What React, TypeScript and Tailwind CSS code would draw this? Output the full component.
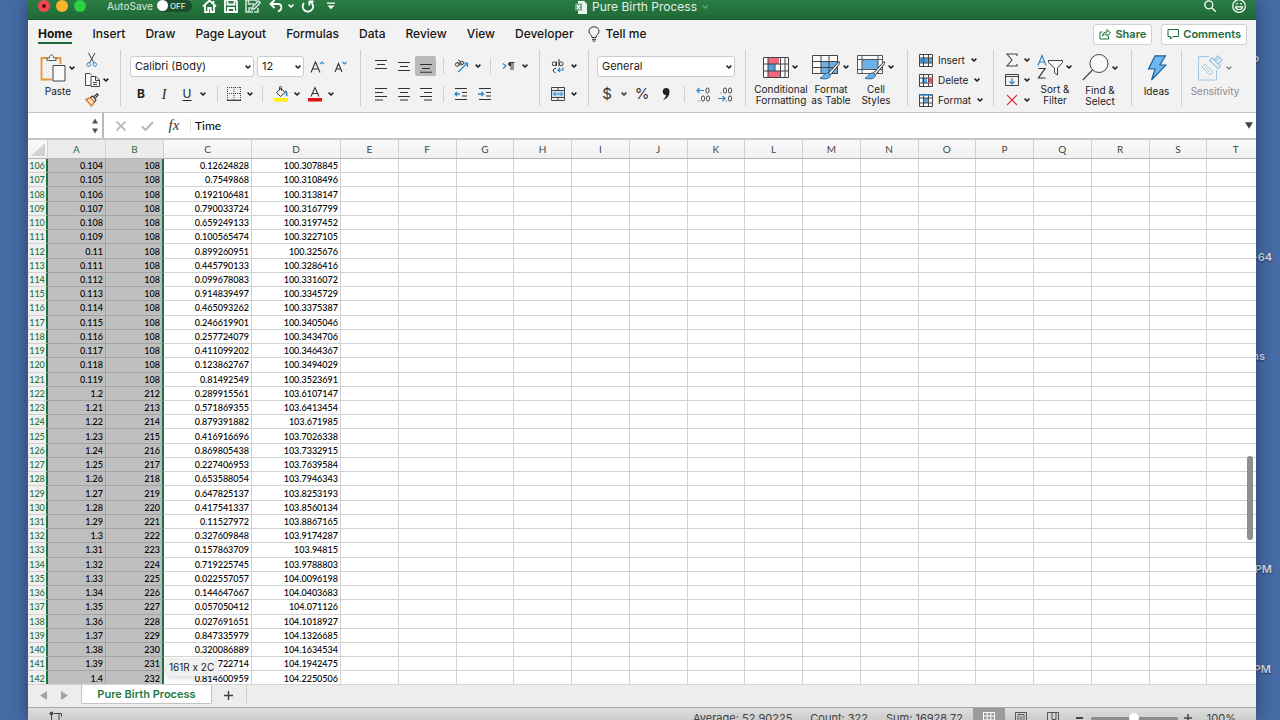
import React from 'react';

interface SheetRow {
  row: number;
  time: string;
  size: string;
  rand: string;
  value: string;
}

const rawRows: [string, string, string, string][] = [
  ['0.104', '108', '0.12624828', '100.3078845'],
  ['0.105', '108', '0.7549868', '100.3108496'],
  ['0.106', '108', '0.192106481', '100.3138147'],
  ['0.107', '108', '0.790033724', '100.3167799'],
  ['0.108', '108', '0.659249133', '100.3197452'],
  ['0.109', '108', '0.100565474', '100.3227105'],
  ['0.11', '108', '0.899260951', '100.325676'],
  ['0.111', '108', '0.445790133', '100.3286416'],
  ['0.112', '108', '0.099678083', '100.3316072'],
  ['0.113', '108', '0.914839497', '100.3345729'],
  ['0.114', '108', '0.465093262', '100.3375387'],
  ['0.115', '108', '0.246619901', '100.3405046'],
  ['0.116', '108', '0.257724079', '100.3434706'],
  ['0.117', '108', '0.411099202', '100.3464367'],
  ['0.118', '108', '0.123862767', '100.3494029'],
  ['0.119', '108', '0.81492549', '100.3523691'],
  ['1.2', '212', '0.289915561', '103.6107147'],
  ['1.21', '213', '0.571869355', '103.6413454'],
  ['1.22', '214', '0.879391882', '103.671985'],
  ['1.23', '215', '0.416916696', '103.7026338'],
  ['1.24', '216', '0.869805438', '103.7332915'],
  ['1.25', '217', '0.227406953', '103.7639584'],
  ['1.26', '218', '0.653588054', '103.7946343'],
  ['1.27', '219', '0.647825137', '103.8253193'],
  ['1.28', '220', '0.417541337', '103.8560134'],
  ['1.29', '221', '0.11527972', '103.8867165'],
  ['1.3', '222', '0.327609848', '103.9174287'],
  ['1.31', '223', '0.157863709', '103.94815'],
  ['1.32', '224', '0.719225745', '103.9788803'],
  ['1.33', '225', '0.022557057', '104.0096198'],
  ['1.34', '226', '0.144647667', '104.0403683'],
  ['1.35', '227', '0.057050412', '104.071126'],
  ['1.36', '228', '0.027691651', '104.1018927'],
  ['1.37', '229', '0.847335979', '104.1326685'],
  ['1.38', '230', '0.320086889', '104.1634534'],
  ['1.39', '231', '0.411722714', '104.1942475'],
  ['1.4', '232', '0.814600959', '104.2250506'],
];

const rows: SheetRow[] = rawRows.map(([time, size, rand, value], i) => ({
  row: 106 + i,
  time,
  size,
  rand,
  value,
}));

const emptyColumns = 'EFGHIJKLMNOPQRST'.split('');
const ribbonTabs = ['Insert', 'Draw', 'Page Layout', 'Formulas', 'Data', 'Review', 'View', 'Developer'];

const Caret: React.FC<{ className?: string }> = ({ className = '' }) => (
  <svg viewBox="0 0 8 6" className={`w-2 h-1.5 shrink-0 ${className}`} fill="none" stroke="currentColor" strokeWidth="1.5">
    <path d="M1.6 1.6 4 4 6.4 1.6" />
  </svg>
);

const Divider: React.FC = () => <div className="w-px shrink-0 self-stretch bg-[#cfcfcf]" />;

const SmallDivider: React.FC<{ className?: string }> = ({ className = '' }) => (
  <div className={`w-px h-4 shrink-0 bg-[#d0d0d0] ${className}`} />
);

interface ToolProps {
  label: string;
  className?: string;
  children: React.ReactNode;
}

const Tool: React.FC<ToolProps> = ({ label, className = '', children }) => (
  <button aria-label={label} className={`flex h-5 shrink-0 items-center justify-center ${className}`}>
    {children}
  </button>
);

interface BigToolProps {
  lines: string[];
  className?: string;
  caret?: boolean;
  children: React.ReactNode;
}

const BigTool: React.FC<BigToolProps> = ({ lines, className = '', caret = true, children }) => (
  <button className={`flex shrink-0 flex-col items-center pt-1 ${className}`}>
    <span className="mb-1 flex h-7 items-center gap-0.5">
      {children}
      {caret && <Caret />}
    </span>
    {lines.map((line) => (
      <span key={line} className="text-[10px] leading-[11px] whitespace-nowrap">{line}</span>
    ))}
  </button>
);

const LinesIcon: React.FC<{ d: string }> = ({ d }) => (
  <svg viewBox="0 0 14 14" className="w-3.5 h-3.5" fill="none" stroke="#333" strokeWidth="1.1">
    <path d={d} />
  </svg>
);

const Brush: React.FC = () => (
  <>
    <path d="M27 7.5 16.5 19l2 1.8L28 9.2Z" fill="#f4f4f4" stroke="#333" />
    <path d="M8 24c3 0 3-5 7.5-5 2 0 3.5 2 2.5 3.6C16.5 25.2 11 25.5 8 24Z" fill="#6cb0e8" stroke="#2a6a9f" />
  </>
);

const TitleBar: React.FC = () => (
  <header className="relative flex h-5 shrink-0 items-center bg-gradient-to-b from-[#2a7c43] to-[#1f6a37] border-b border-[#17572b] pb-2 pl-2.5 pr-2.5 text-white">
    <div className="flex gap-1.5">
      <button aria-label="Close" className="flex h-3 w-3 items-center justify-center rounded-full bg-[#f2494f]">
        <span className="h-1 w-1 rounded-full bg-[#5c0a0d]" />
      </button>
      <button aria-label="Minimize" className="h-3 w-3 rounded-full bg-[#f7b42d]" />
      <button aria-label="Zoom" className="h-3 w-3 rounded-full bg-[#2bd141]" />
    </div>
    <span className="ml-[21px] text-[10px] leading-3 font-medium text-[#c6dccc]">AutoSave</span>
    <button role="switch" aria-checked="false" aria-label="AutoSave" className="ml-1 flex h-3 w-[35px] items-center rounded-full bg-[#1b4f2c] text-[8px] font-medium text-[#e0eae3]">
      <span className="mr-0.5 h-[11px] w-[11px] rounded-full bg-white" />
      OFF
    </button>
    <div className="ml-2.5 flex items-center text-white">
      <Tool label="Home" className="w-[15px]">
        <svg viewBox="0 0 15 14" className="w-[15px] h-3.5" fill="none" stroke="currentColor" strokeWidth="1.8">
          <path d="M1 7.5 7.5 1.5 14 7.5M3 6.5V13h3.200V9h2.600v4H12V6.5M11.5 4.5V2" />
        </svg>
      </Tool>
      <Tool label="Save" className="ml-[7px] w-3.5">
        <svg viewBox="0 0 14 14" className="w-3.5 h-3.5" fill="none" stroke="currentColor" strokeWidth="1.8">
          <path d="M1 1h10.5L13 2.5V13H1ZM3.5 1v4.5h7V1M4 13V9h6v4" />
        </svg>
      </Tool>
      <Tool label="Save a copy" className="ml-[7px] w-4">
        <svg viewBox="0 0 16 14" className="w-4 h-3.5" fill="none" stroke="#cfe3d5" strokeWidth="1.5">
          <path d="M8 13H1V1h9l2 1M3.5 1v4H9M4 13V9h4M7 10.5l1-3L13.5 2 15.2 3.7 9.8 9.5ZM13 9v4H9" />
        </svg>
      </Tool>
      <Tool label="Undo" className="ml-2 w-3.5">
        <svg viewBox="0 0 14 14" className="w-3.5 h-3.5" fill="none" stroke="currentColor" strokeWidth="1.8">
          <path d="M5.5 1 1.5 5l4 4M1.5 5H9c4 0 5 5.5 0 7.5" />
        </svg>
      </Tool>
      <Caret className="ml-1" />
      <Tool label="Redo" className="ml-1.5 w-3.5">
        <svg viewBox="0 0 14 14" className="w-3.5 h-3.5" fill="none" stroke="currentColor" strokeWidth="1.8">
          <path d="M8 2.5h4.5M8.3 2v4.5M8.5 2.5A5.2 5.2 0 1 1 3 4" />
        </svg>
      </Tool>
      <Tool label="Customize toolbar" className="ml-3 w-2">
        <svg viewBox="0 0 8 8" className="w-2 h-2">
          <path d="M0 .5h8v1.3H0ZM.5 3.5h7L4 7.2Z" fill="currentColor" />
        </svg>
      </Tool>
    </div>
    <div className="absolute inset-x-0 top-0 mx-auto flex h-3.5 w-max items-center gap-1 text-[12px] text-[#e3efe6]">
      <svg viewBox="0 0 13 13" className="w-[13px] h-[13px]">
        <path d="M3 0h6l3 3v10H3Z" fill="#e9f3ec" />
        <path d="M0 2.5h7v7H0Z" fill="#6fae84" />
        <path d="m2 4 3 4M5 4 2 8" stroke="#fff" strokeWidth="1.2" />
      </svg>
      Pure Birth Process
      <Caret className="text-[#5fa276]" />
    </div>
    <div className="ml-auto flex items-center gap-4">
      <Tool label="Search" className="w-3">
        <svg viewBox="0 0 12 12" className="w-3 h-3" fill="none" stroke="currentColor" strokeWidth="1.3">
          <circle cx="4.8" cy="4.8" r="4" />
          <path d="m7.8 7.8 4 4" />
        </svg>
      </Tool>
      <Tool label="Feedback" className="w-3.5">
        <svg viewBox="0 0 14 14" className="w-3.5 h-3.5" fill="none" stroke="currentColor" strokeWidth="1.2">
          <circle cx="7" cy="7" r="6.3" />
          <path d="M3.5 7.8c.8 3.6 6.2 3.6 7 0Z" />
          <path d="M5 4v1.500M9 4v1.500" strokeWidth="1.5" />
        </svg>
      </Tool>
    </div>
  </header>
);

const TabStrip: React.FC = () => (
  <nav className="flex h-[30px] shrink-0 items-center pb-0.5 pl-2.5 pr-[9px] text-[12px] font-medium text-[#161616]">
    <div className="flex items-center gap-5">
      <a href="#home" className="relative font-bold leading-5">
        Home
        <span className="absolute inset-x-0 bottom-0 h-0.5 bg-[#1a6b38]" />
      </a>
      {ribbonTabs.map((tab) => (
        <a key={tab} href={`#${tab}`} className="leading-5">{tab}</a>
      ))}
    </div>
    <button className="ml-3.5 flex items-center gap-1.5">
      <svg viewBox="0 0 12 16" className="w-3 h-4" fill="none" stroke="#333" strokeWidth="1">
        <path d="M4 11.5C4 8.5 1 8.5 1 5.3 1 2.5 3.2.8 6 .8s5 1.700 5 4.5c0 3.2-3 3.2-3 6.200ZM4 13.3h4M4.5 15h3" />
      </svg>
      Tell me
    </button>
    <div className="ml-auto flex gap-[9px] text-[11px] font-semibold text-[#1d6b3a]">
      <button className="flex h-[21px] items-center gap-1 rounded-[3px] border border-[#d0d0d0] bg-white px-[5px]">
        <svg viewBox="0 0 12 12" className="w-3 h-3" fill="none" stroke="currentColor" strokeWidth="1">
          <path d="M3.5 4H1v7h8.5V8M3.5 8c.3-3 2-4 4.5-4V1.5L11.5 5 8 8V6C6 6 4.5 6.5 3.5 8Z" />
        </svg>
        Share
      </button>
      <button className="flex h-[21px] items-center gap-1 rounded-[3px] border border-[#d0d0d0] bg-white px-[5px]">
        <svg viewBox="0 0 12 12" className="w-3 h-3" fill="none" stroke="currentColor" strokeWidth="1">
          <path d="M1 1.5h10.5v7H6L3.5 11V8.5H1Z" />
        </svg>
        Comments
      </button>
    </div>
  </nav>
);

const ClipboardGroup: React.FC = () => (
  <div className="flex w-[92px] shrink-0 gap-0.5 pl-3">
    <BigTool lines={['Paste']} className="w-9">
      <svg viewBox="0 0 26 28" className="w-[26px] h-7 shrink-0" fill="none">
        <path d="M7 4H1.5v21.5H12M16 4h4.5v6" stroke="#e8963c" strokeWidth="1.8" />
        <path d="M7 6.5V4h2.5C9.5 0 13.5 0 13.5 4H16v2.5Z" fill="#fff" stroke="#555" />
        <path d="M13 11.5h12V27H13Z" fill="#fafafa" stroke="#444" />
      </svg>
    </BigTool>
    <div className="flex flex-col pl-1.5">
      <Tool label="Cut" className="w-4">
        <svg viewBox="0 0 12 14" className="w-3 h-3.5" fill="none">
          <path d="M2.5 0 8 10M9 0 3.5 10" stroke="#444" />
          <circle cx="2.7" cy="11.5" r="1.8" stroke="#2f86c9" />
          <circle cx="8.8" cy="11.5" r="1.8" stroke="#2f86c9" />
        </svg>
      </Tool>
      <div className="flex items-center gap-0.5">
        <Tool label="Copy" className="w-4">
          <svg viewBox="0 0 15 14" className="w-[15px] h-3.5" fill="#fafafa" stroke="#444">
            <path d="M5.5 12.5h-5V.5H5l2 2M6 3.5h5L14.5 7v6.5H6ZM10.5 3.5V7.5h4M8 9.5h4M8 11.5h4" />
          </svg>
        </Tool>
        <Caret />
      </div>
      <Tool label="Format painter" className="w-4">
        <svg viewBox="0 0 14 14" className="w-3.5 h-3.5" fill="none">
          <path d="M1 6.5 5.5 4.5 9.500 9 6.5 13Z" fill="#fbe3cc" stroke="#e07b28" strokeWidth="1.4" />
          <path d="M5.5 4.5 7.5 3l3.500 4-1.500 2M8.500 4.200 12 .8 13.300 2 9.800 5.600" stroke="#333" strokeWidth="1.1" />
        </svg>
      </Tool>
    </div>
  </div>
);

const FontGroup: React.FC = () => (
  <div className="flex w-[239px] shrink-0 flex-col justify-between pt-1.5 pb-0.5">
    <div className="flex items-center gap-[3px] pl-[9px]">
      <label className="relative flex items-center">
        <select aria-label="Font" className="h-[21px] w-[124px] appearance-none rounded-[3px] border border-[#cbcbcb] bg-white pl-1 text-[11px]">
          <option>Calibri (Body)</option>
        </select>
        <Caret className="absolute right-0.5" />
      </label>
      <label className="relative flex items-center">
        <select aria-label="Font size" className="h-[21px] w-[47px] appearance-none rounded-[3px] border border-[#cbcbcb] bg-white pl-1 text-[11px]">
          <option>12</option>
        </select>
        <Caret className="absolute right-0.5" />
      </label>
      <Tool label="Increase font size" className="w-5">
        <svg viewBox="0 0 14 14" className="w-3.5 h-3.5" fill="none">
          <path d="M1 12.5 5.5 2l4.5 10.5M2.7 9h5.6" stroke="#333" strokeWidth="1.1" />
          <path d="m10 4 2-2 2 2" stroke="#2f86c9" strokeWidth="1.2" />
        </svg>
      </Tool>
      <Tool label="Decrease font size" className="w-5">
        <svg viewBox="0 0 14 14" className="w-3.5 h-3.5" fill="none">
          <path d="M2 12 5.5 3.5 9 12M3.3 9h4.4" stroke="#333" strokeWidth="1.1" />
          <path d="m9.5 2 2 2 2-2" stroke="#2f86c9" strokeWidth="1.2" />
        </svg>
      </Tool>
    </div>
    <div className="flex items-center pl-2 text-[12px] text-[#222]">
      <Tool label="Bold" className="w-6 font-bold">B</Tool>
      <Tool label="Italic" className="w-[22px] font-['Liberation_Serif'] text-[14px] italic">I</Tool>
      <Tool label="Underline" className="w-6 underline underline-offset-2">U</Tool>
      <Caret />
      <SmallDivider className="ml-2.5 mr-1.5" />
      <Tool label="Borders" className="w-5">
        <svg viewBox="0 0 14 14" className="w-3.5 h-3.5" fill="none" stroke="#444">
          <path d="M.5 0v13M13.5 0v13M7 0v13M0 .5h14M0 6.5h14" strokeDasharray="1 1" />
          <path d="M0 13.3h14" strokeWidth="1.3" />
        </svg>
      </Tool>
      <Caret className="ml-0.5" />
      <SmallDivider className="mx-2" />
      <Tool label="Fill color" className="w-5">
        <svg viewBox="0 0 14 16" className="w-3.5 h-4" fill="none">
          <path d="M0 12h14v3.5H0Z" fill="#fdf200" />
          <path d="M2.5 6.5 7 2.5l4 4L6.5 10.5ZM5.5 4V1.5c0-1.5 2-1.5 2 0v3" stroke="#333" />
          <path d="M11 5c2 1 2 3 1.5 5" stroke="#2f86c9" strokeWidth="1.6" />
        </svg>
      </Tool>
      <Caret className="ml-0.5" />
      <Tool label="Font color" className="ml-1 w-5">
        <svg viewBox="0 0 14 16" className="w-3.5 h-4" fill="none">
          <path d="M0 12h14v3.5H0Z" fill="#e01010" />
          <path d="M3 10.5 7 1.5l4 9M4.5 7.5h5" stroke="#333" strokeWidth="1.1" />
        </svg>
      </Tool>
      <Caret className="ml-0.5" />
    </div>
  </div>
);

const AlignGroup: React.FC = () => (
  <div className="flex w-[178px] shrink-0 flex-col justify-between pl-2 pt-1.5 pb-0.5">
    <div className="flex items-center">
      <Tool label="Align top" className="w-6"><LinesIcon d="M1 1.5h12M3 5.5h8M1 9.5h12" /></Tool>
      <Tool label="Align middle" className="w-[22px]"><LinesIcon d="M1 3.5h12M3 7.5h8M1 11.5h12" /></Tool>
      <Tool label="Align bottom" className="w-[21px] rounded-[2px] bg-[#b9b9b9]"><LinesIcon d="M1 5.5h12M3 9.5h8M1 13.3h12" /></Tool>
      <SmallDivider className="mx-[7px]" />
      <Tool label="Orientation" className="w-5">
        <svg viewBox="0 0 15 14" className="w-[15px] h-3.5" fill="none">
          <circle cx="3.2" cy="5.5" r="1.8" stroke="#333" />
          <circle cx="7.8" cy="4" r="1.8" stroke="#333" />
          <path d="M3.500 3 6 6.500M4.500 .5l3 4.500" stroke="#333" />
          <path d="M4 13 13.5 4M9.5 4h4v4" stroke="#2f86c9" strokeWidth="1.2" />
        </svg>
      </Tool>
      <Caret className="ml-[3px]" />
      <SmallDivider className="mx-2" />
      <Tool label="Text direction" className="w-5">
        <svg viewBox="0 0 14 12" className="w-3.5 h-3" fill="none">
          <path d="m1 3.500 3 2.500-3 2.500" stroke="#2f86c9" strokeWidth="1.2" />
          <path d="M9 2.500v7.500M11 2.500v7.500M12.500 2.500H8.500" stroke="#333" />
          <path d="M9 2H8C5.500 2 5.500 6 8 6h1Z" fill="#333" />
        </svg>
      </Tool>
      <Caret className="ml-0.5" />
    </div>
    <div className="flex items-center">
      <Tool label="Align left" className="w-6"><LinesIcon d="M1 1.500h12M1 5.500h8M1 9.500h12M1 13h8" /></Tool>
      <Tool label="Center" className="w-[22px]"><LinesIcon d="M1 1.500h12M3 5.500h8M1 9.500h12M3 13h8" /></Tool>
      <Tool label="Align right" className="w-[21px]"><LinesIcon d="M1 1.500h12M5 5.500h8M1 9.500h12M5 13h8" /></Tool>
      <SmallDivider className="mx-[7px]" />
      <Tool label="Decrease indent" className="w-5">
        <svg viewBox="0 0 14 14" className="w-3.5 h-3.5" fill="none" stroke="#333">
          <path d="M1 1.500h12M8 5.500h5M8 9h5M1 12.500h12" />
          <path d="M6 7H1M3 5 1 7l2 2" stroke="#2f86c9" strokeWidth="1.3" />
        </svg>
      </Tool>
      <Tool label="Increase indent" className="ml-1 w-5">
        <svg viewBox="0 0 14 14" className="w-3.5 h-3.5" fill="none" stroke="#333">
          <path d="M1 1.500h12M8 5.500h5M8 9h5M1 12.500h12" />
          <path d="M0 7h5M3.500 5l2 2-2 2" stroke="#2f86c9" strokeWidth="1.3" />
        </svg>
      </Tool>
    </div>
  </div>
);

const WrapGroup: React.FC = () => (
  <div className="flex w-12 shrink-0 flex-col justify-between pl-2 pt-1.5 pb-0.5">
    <div className="flex items-center gap-0.5">
      <Tool label="Wrap text" className="w-5">
        <svg viewBox="0 0 14 15" className="w-3.5 h-[15px]" fill="none" stroke="#333">
          <circle cx="3.2" cy="4.8" r="1.9" />
          <path d="M5.500 2.500v4.500M8 0v7" />
          <circle cx="10.2" cy="4.8" r="1.9" />
          <path d="M5 9.500c-3-1-4 4-.5 4" />
          <path d="M12 8.500v2.500H7.500M9 9l-2 2 2 2" stroke="#2f86c9" strokeWidth="1.2" />
        </svg>
      </Tool>
      <Caret />
    </div>
    <div className="flex items-center gap-0.5">
      <Tool label="Merge cells" className="w-5">
        <svg viewBox="0 0 14 14" className="w-3.5 h-3.5" fill="none">
          <path d="M.5 3.500h13v7H.5Z" fill="#c4e0f5" />
          <path d="M.5.500h13v13H.5ZM.5 3.500h13M.5 10.500h13M7 .5v3M7 10.500v3" stroke="#444" />
          <path d="M2.500 7h9M4.500 5l-2 2 2 2M9.500 5l2 2-2 2" stroke="#2f86c9" />
        </svg>
      </Tool>
      <Caret />
    </div>
  </div>
);

const NumberGroup: React.FC = () => (
  <div className="flex w-[156px] shrink-0 flex-col justify-between pl-2 pt-1.5 pb-0.5">
    <label className="relative flex w-max items-center">
      <select aria-label="Number format" className="h-[21px] w-[138px] appearance-none rounded-[3px] border border-[#cbcbcb] bg-white pl-1 text-[11px]">
        <option>General</option>
      </select>
      <Caret className="absolute right-0.5" />
    </label>
    <div className="flex items-center text-[15px] text-[#333]">
      <Tool label="Currency" className="w-5">$</Tool>
      <Caret className="ml-[3px]" />
      <Tool label="Percent" className="ml-1 w-5">%</Tool>
      <Tool label="Comma style" className="ml-1 w-5">
        <svg viewBox="0 0 8 12" className="w-2 h-3" fill="#222">
          <path d="M4 0c2.500 0 3.500 1.700 3.500 3.700C7.500 7.500 5 11 1 12c2-2 3-3.500 3-5C2 7.200.7 5.500.7 3.600.7 1.600 2 0 4 0Z" />
        </svg>
      </Tool>
      <SmallDivider className="mx-2" />
      <Tool label="Increase decimal" className="w-5">
        <svg viewBox="0 0 14 15" className="w-3.5 h-[15px]" fill="none" stroke="#444">
          <rect x="10" y="1" width="3" height="5" rx="1.5" />
          <rect x="5.5" y="9" width="3" height="5" rx="1.5" />
          <rect x="10.5" y="9" width="3" height="5" rx="1.5" />
          <path d="M3 13.500v1" />
          <path d="M8 3.500H1M3.500 1 1 3.500 3.500 6" stroke="#2f86c9" strokeWidth="1.2" />
        </svg>
      </Tool>
      <Tool label="Decrease decimal" className="ml-0.5 w-5">
        <svg viewBox="0 0 14 15" className="w-3.5 h-[15px]" fill="none" stroke="#444">
          <rect x="5.5" y="1" width="3" height="5" rx="1.5" />
          <rect x="10.5" y="1" width="3" height="5" rx="1.5" />
          <rect x="10.5" y="9" width="3" height="5" rx="1.5" />
          <path d="M3 5.500v1M8.500 13.500v1" />
          <path d="M0 11.500h7M4.500 9 7 11.500 4.500 14" stroke="#2f86c9" strokeWidth="1.2" />
        </svg>
      </Tool>
    </div>
  </div>
);

const StylesGroup: React.FC = () => (
  <div className="flex w-[161px] shrink-0 pl-2">
    <BigTool lines={['Conditional', 'Formatting']} className="w-[54px]">
      <svg viewBox="0 0 26 21" className="w-[26px] h-[21px] shrink-0">
        <path d="M.5.500h25v20H.5Z" fill="#fafafa" />
        <path d="M5 1h11v6H5ZM5 14h13v6H5Z" fill="#f4667c" />
        <path d="M5 7h7v7H5Z" fill="#4f9fe0" />
        <path d="M.5.500h25v20H.5ZM.5 7h25M.5 14h25M5 .5v20M17.500 .5v20M22 .5v20M12 7v7" fill="none" stroke="#444" />
      </svg>
    </BigTool>
    <BigTool lines={['Format', 'as Table']} className="w-[46px]">
      <svg viewBox="0 0 28 26" className="w-7 h-[26px] shrink-0">
        <path d="M.5 1.500h25v18H.5Z" fill="#fafafa" />
        <path d="M9 7.500h16.500v12H9Z" fill="#6cb0e8" />
        <path d="M.5 1.500h25v18H.5ZM.5 7.500h25M.5 13.500h25M9 1.500v18M17 1.500v18" fill="none" stroke="#444" />
        <Brush />
      </svg>
    </BigTool>
    <BigTool lines={['Cell', 'Styles']} className="w-11">
      <svg viewBox="0 0 28 26" className="w-7 h-[26px] shrink-0">
        <path d="M.5 1.500h25v18H.5Z" fill="#fafafa" />
        <path d="M5 5.500h16v10H5Z" fill="#6cb0e8" />
        <path d="M.5 1.500h25v18H.5ZM.5 5.500h25M.5 15.500h25M5 1.500v18M21 1.500v18" fill="none" stroke="#555" />
        <Brush />
      </svg>
    </BigTool>
  </div>
);

const CellsGroup: React.FC = () => {
  const items = [
    { label: 'Insert', accent: 'M3 4h11v5H3Z', mark: 'M7 6.500H1M3.500 4 1 6.500 3.500 9', color: '#2f86c9' },
    { label: 'Delete', accent: 'M3 4h5v5H3Z', mark: 'm9 4 5 5M14 4l-5 5', color: '#d8343f' },
    { label: 'Format', accent: 'M4 4h6v5H4Z', mark: 'M2 0v2M12 0v2M2 1h10', color: '#2f86c9' },
  ];
  return (
    <div className="flex w-[85px] shrink-0 flex-col pl-[11px]">
      {items.map((item) => (
        <button key={item.label} className="flex h-5 shrink-0 items-center gap-[5px] text-[10px]">
          <svg viewBox="0 0 14 13" className="w-3.5 h-[13px]" fill="none">
            <path d="M.5.500h13v12H.5Z" fill="#fafafa" />
            <path d={item.accent} fill="#5aa7e4" />
            <path d="M.5.500h13v12H.5ZM.5 4h13M.5 9h13M4.500 .5v12M9.500 .5v12" stroke="#444" />
            <path d={item.mark} stroke={item.color} strokeWidth="1.4" />
          </svg>
          {item.label}
          <Caret />
        </button>
      ))}
    </div>
  );
};

const EditingGroup: React.FC = () => (
  <div className="flex w-[137px] shrink-0 pl-[11px]">
    <div className="flex w-7 flex-col">
      <button aria-label="AutoSum" className="flex h-5 shrink-0 items-center gap-1">
        <svg viewBox="0 0 14 14" className="w-3.5 h-3.5" fill="none" stroke="#444" strokeWidth="1.1">
          <path d="M12 3V1H2l5 6-5 6h10v-2" />
        </svg>
        <Caret />
      </button>
      <button aria-label="Fill" className="flex h-5 shrink-0 items-center gap-1">
        <svg viewBox="0 0 14 14" className="w-3.5 h-3.5" fill="none" stroke="#444">
          <path d="M.5 1.500h13v11H.5ZM.5 3.500h13" />
          <path d="M7 5v6M4.500 8.500 7 11l2.500-2.500" stroke="#2f86c9" strokeWidth="1.2" />
        </svg>
        <Caret />
      </button>
      <button aria-label="Clear" className="flex h-5 shrink-0 items-center gap-1">
        <svg viewBox="0 0 14 14" className="w-3.5 h-3.5" fill="none" stroke="#d8343f" strokeWidth="1.1">
          <path d="m2 2 10 10M12 2 2 12" />
        </svg>
        <Caret />
      </button>
    </div>
    <BigTool lines={['Sort &', 'Filter']} className="w-11">
      <svg viewBox="0 0 26 26" className="w-[26px] h-[26px] shrink-0" fill="none">
        <path d="M1 11.500 5 1.500l4 10M2.500 8h5" stroke="#2f86c9" strokeWidth="1.2" />
        <path d="M1.500 14.500H8L1.500 24H8.500" stroke="#333" strokeWidth="1.2" />
        <path d="M11.500 6.500h14v2L20.500 14v7l-3-2v-5l-6-5.500Z" fill="#fafafa" stroke="#444" />
      </svg>
    </BigTool>
    <BigTool lines={['Find &', 'Select']} className="w-[46px]">
      <svg viewBox="0 0 27 27" className="w-[27px] h-[27px] shrink-0">
        <circle cx="17" cy="9.5" r="9" fill="#fafafa" stroke="#444" />
        <path d="M10.500 16 .8 26" stroke="#444" strokeWidth="1.2" />
      </svg>
    </BigTool>
  </div>
);

const Ribbon: React.FC = () => (
  <div className="flex h-[63px] shrink-0 border-b border-[#c4c4c4] pb-1.5 text-[#1c1c1c]">
    <ClipboardGroup />
    <Divider />
    <FontGroup />
    <Divider />
    <AlignGroup />
    <Divider />
    <WrapGroup />
    <Divider />
    <NumberGroup />
    <Divider />
    <StylesGroup />
    <Divider />
    <CellsGroup />
    <Divider />
    <EditingGroup />
    <Divider />
    <BigTool lines={['Ideas']} className="w-[49px]" caret={false}>
      <svg viewBox="0 0 20 26" className="w-5 h-[26px]">
        <path d="M8 .8h10.500L13 10h6L4.500 25 8 14H1.500Z" fill="#6db6ee" stroke="#1f6196" strokeWidth="1.2" />
      </svg>
    </BigTool>
    <Divider />
    <BigTool lines={['Sensitivity']} className="w-[66px] text-[#8b8b8b]">
      <svg viewBox="0 0 26 26" className="w-[26px] h-[26px] shrink-0" fill="none" stroke="#9cc9e0">
        <path d="M12 1.500H1.500v23.500h18V15" />
        <path d="m12.500 5.500 2.500-2.500 8.500 8-2.500 2.500ZM17 5l4-4 4 4-3.500 4M18.500 6.500l3-3" strokeWidth="1.3" />
        <path d="m5 12 3-3 8 8-3 3ZM8 12l5 5M9.500 10.500l5 5" />
      </svg>
    </BigTool>
  </div>
);

const FormulaBar: React.FC = () => (
  <div className="flex h-[25px] shrink-0 items-stretch bg-white">
    <div className="flex w-[76px] shrink-0 items-center border-r-2 border-[#b9b9b9]">
      <input aria-label="Name box" className="h-full w-16 bg-transparent px-1 text-[11px] outline-none" />
      <svg viewBox="0 0 6 16" className="w-1.5 h-4" fill="#555">
        <path d="M0 5.500h6L3 .5ZM0 10.500h6l-3 5Z" />
      </svg>
    </div>
    <Tool label="Cancel" className="ml-1.5 h-full w-[22px]">
      <svg viewBox="0 0 10 10" className="w-2.5 h-2.5" stroke="#b8b8b8" strokeWidth="1.8"><path d="m.5.500 9 9M9.500.500l-9 9" /></svg>
    </Tool>
    <Tool label="Enter" className="ml-1 h-full w-[22px]">
      <svg viewBox="0 0 13 10" className="w-[13px] h-2.5" fill="none" stroke="#b8b8b8" strokeWidth="2"><path d="m1 5.500 3.500 3.500L12 1" /></svg>
    </Tool>
    <Tool label="Insert function" className="ml-1 h-full w-6 font-['Liberation_Serif'] text-[15px] italic text-[#333]">fx</Tool>
    <div className="mx-1 my-1.5 w-px bg-[#dcdcdc]" />
    <input aria-label="Formula" defaultValue="Time" className="min-w-0 flex-1 font-['Lato',sans-serif] text-[12px] outline-none" />
    <button aria-label="Expand formula bar" className="mr-[3px] w-2">
      <svg viewBox="0 0 6 5" className="w-2 h-[7px]" fill="#444"><path d="M0 0h6L3 5Z" /></svg>
    </button>
  </div>
);

const headCell = 'border-r border-b border-[#d0d0d0] border-b-[#b5b5b5] font-normal text-[10px] leading-none';
const plainCell = 'border-r border-b border-[#d2d2d2] pt-px';

const Sheet: React.FC = () => (
  <main className="relative min-h-0 flex-1 overflow-hidden border-t-2 border-[#c6c6c6] bg-white">
    <table className="h-[calc(100%+2px)] w-[calc(100%+9px)] table-fixed border-separate border-spacing-0 text-right font-['Lato',sans-serif] text-[9px] leading-[12px] font-medium text-black">
      <colgroup>
        <col className="w-5" />
        <col className="w-[58px]" />
        <col className="w-[58px]" />
        <col className="w-[88px]" />
        <col className="w-[89px]" />
        {emptyColumns.map((c) => <col key={c} />)}
      </colgroup>
      <thead>
        <tr className="h-[19px] bg-gradient-to-b from-[#fafafa] to-[#f0f0f0] text-center text-[#444]">
          <th className={headCell}>
            <svg viewBox="0 0 14 13" className="ml-auto mr-0.5 w-3.5 h-[13px]" fill="#d0d0d0"><path d="M14 0v13H0Z" /></svg>
          </th>
          <th className={`${headCell} bg-[#ececec] text-[#1f7040]`}>A</th>
          <th className={`${headCell} bg-[#ececec] text-[#1f7040]`}>B</th>
          <th className={headCell}>C</th>
          <th className={headCell}>D</th>
          {emptyColumns.map((c) => <th key={c} className={headCell}>{c}</th>)}
        </tr>
      </thead>
      <tbody>
        {rows.map((r) => (
          <tr key={r.row}>
            <th className="border-b border-r-2 border-b-[#d2d2d2] border-r-[#1f7040] bg-[#f0f0f0] pt-px text-center font-medium text-[#1f7040]">{r.row}</th>
            <td className="border-b border-r border-[#a3a3a3] bg-[#bfbfbf] pt-px pr-0.5">{r.time}</td>
            <td className="border-b border-r-2 border-b-[#a3a3a3] border-r-[#1f7040] bg-[#bfbfbf] pt-px pr-0.5">{r.size}</td>
            <td className={`${plainCell} pr-0.5`}>{r.rand}</td>
            <td className={`${plainCell} pr-0.5`}>{r.value}</td>
            {emptyColumns.map((c) => <td key={c} className={plainCell} />)}
          </tr>
        ))}
      </tbody>
    </table>
    <div className="absolute bottom-2 left-[137px] rounded-[2px] bg-[#f0f0f0] px-1 text-[10px] leading-[18px] text-[#222] shadow-md">161R x 2C</div>
    <div className="absolute right-[3px] top-[58%] h-[84px] w-1.5 rounded-full bg-[#8f8f8f]" />
  </main>
);

const SheetTabs: React.FC = () => (
  <div className="flex h-[23px] shrink-0 items-start border-t border-[#d4d4d4] bg-[#ededed] pl-3">
    <button aria-label="Previous sheet" className="flex h-[21px] w-2 items-center">
      <svg viewBox="0 0 7 9" className="w-[7px] h-[9px]" fill="#a3a3a3"><path d="M7 0v9L0 4.500Z" /></svg>
    </button>
    <button aria-label="Next sheet" className="ml-[13px] flex h-[21px] w-2 items-center">
      <svg viewBox="0 0 7 9" className="w-[7px] h-[9px]" fill="#a3a3a3"><path d="M0 0v9l7-4.500Z" /></svg>
    </button>
    <button className="ml-3 h-[19px] w-[131px] rounded-b-[2px] border border-t-0 border-[#c4c4c4] bg-white text-[11px] font-semibold leading-[18px] text-[#1d7a3f]">
      Pure Birth Process
    </button>
    <button aria-label="Add sheet" className="ml-3 flex h-[21px] w-2.5 items-center">
      <svg viewBox="0 0 9 9" className="w-[9px] h-[9px]" stroke="#444" strokeWidth="1.5"><path d="M4.500 0v9M0 4.500h9" /></svg>
    </button>
    <div className="ml-3 h-[18px] w-px bg-[#cfcfcf]" />
  </div>
);

const StatusBar: React.FC = () => (
  <footer className="h-[13px] shrink-0 overflow-hidden border-t border-[#a9a9a9] bg-gradient-to-b from-[#dedede] to-[#cdcdcd] text-[11px] text-[#3f3f3f]">
    <div className="flex h-5 items-center pl-[21px] pr-5">
      <svg viewBox="0 0 14 14" className="w-3.5 h-3.5" fill="none" stroke="#444">
        <circle cx="2.5" cy="2.5" r="1.5" fill="#444" />
        <path d="M2.500 3v10M5 2.500h7.500M10 2.500V13M12.500 2.500v3" />
      </svg>
      <span className="ml-auto">Average: 52.90225</span>
      <span className="ml-[18px]">Count: 322</span>
      <span className="ml-[18px]">Sum: 16928.72</span>
      <button aria-label="Normal view" className="ml-2.5 flex h-5 w-8 items-center justify-center bg-[#9b9b9b]">
        <svg viewBox="0 0 12 12" className="w-3 h-3" fill="none" stroke="#fff"><path d="M.5.500h11v11H.5ZM.5 4h11M.5 8h11M4.200 .5v11M7.800 .5v11" /></svg>
      </button>
      <button aria-label="Page layout view" className="ml-2.5">
        <svg viewBox="0 0 12 12" className="w-3 h-3" fill="none" stroke="#555"><path d="M.5.500h11v11H.5ZM3 2.500h6v9H3ZM4.500 5h3M4.500 7h3M4.500 9h3" /></svg>
      </button>
      <button aria-label="Page break view" className="ml-5">
        <svg viewBox="0 0 12 12" className="w-3 h-3" fill="none" stroke="#555"><path d="M.5.500h11v11H.5ZM5 .5v7M5 7.500h4V.5" /></svg>
      </button>
      <button aria-label="Zoom out" className="ml-[17px] h-0.5 w-[7px] bg-[#444]" />
      <input
        type="range"
        aria-label="Zoom level"
        defaultValue={50}
        className="ml-2 h-[3px] w-[87px] appearance-none rounded-full bg-[#8e8e8e] [&::-webkit-slider-thumb]:h-2.5 [&::-webkit-slider-thumb]:w-2.5 [&::-webkit-slider-thumb]:appearance-none [&::-webkit-slider-thumb]:rounded-full [&::-webkit-slider-thumb]:bg-white"
      />
      <button aria-label="Zoom in" className="ml-1.5">
        <svg viewBox="0 0 8 8" className="w-2 h-2" stroke="#444" strokeWidth="1.5"><path d="M4 0v8M0 4h8" /></svg>
      </button>
      <span className="ml-[15px]">100%</span>
    </div>
  </footer>
);

const DesktopLabel: React.FC<{ text: string; className: string }> = ({ text, className }) => (
  <span className={`absolute text-[11px] font-semibold text-[#d9dfe9] [text-shadow:0_1px_2px_#1b2a4a] ${className}`}>{text}</span>
);

export default function App() {
  return (
    <div className="relative flex h-screen overflow-hidden bg-[#476ca6] pl-7 pr-6 font-['Inter',sans-serif]">
      <DesktopLabel text="p" className="right-[21px] top-[50px]" />
      <DesktopLabel text="-64" className="right-2 top-[249px]" />
      <DesktopLabel text="ms" className="right-[15px] top-[348px]" />
      <DesktopLabel text="PM" className="right-2 top-[561px]" />
      <DesktopLabel text="PM" className="right-[9px] top-[661px]" />
      <div className="relative flex min-w-0 flex-1 flex-col overflow-hidden bg-[#f2f2f2] shadow-[0_0_18px_rgba(15,30,60,0.55)]">
        <TitleBar />
        <TabStrip />
        <Ribbon />
        <FormulaBar />
        <Sheet />
        <SheetTabs />
        <StatusBar />
      </div>
    </div>
  );
}
